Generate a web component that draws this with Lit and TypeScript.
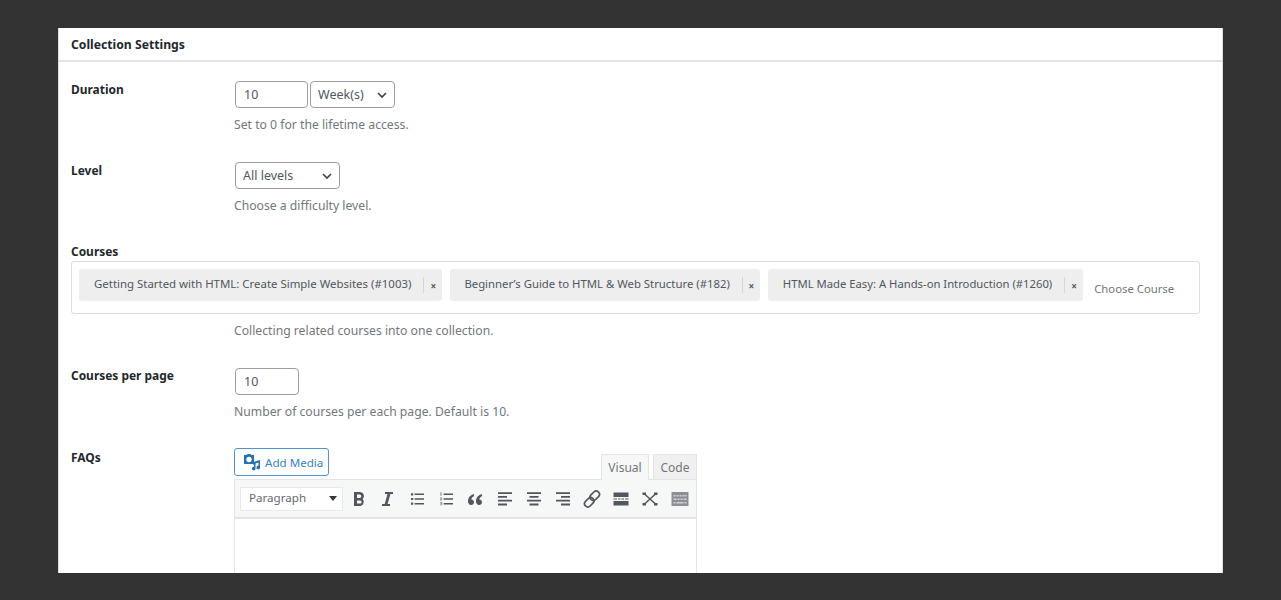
import { LitElement, html, css, svg } from "lit";
import { customElement } from "lit/decorators.js";

const chevron = html`<svg class="chev" width="12" height="12" viewBox="0 0 12 12"><path d="M2 4l4 4 4-4" fill="none" stroke="#3c434a" stroke-width="1.6"/></svg>`;

const I = (body: unknown, w = 20, h = 20) =>
  html`<svg class="ti" width=${w} height=${h} viewBox="0 0 20 20" fill="#50575e">${body}</svg>`;

@customElement("app-root")
export class AppRoot extends LitElement {
  static styles = css`
    :host { display: block; height: 600px; background: #333; padding: 28px 58px 27px; box-sizing: border-box; overflow: hidden;
      font-family: "Noto Sans", sans-serif; font-size: 12.5px; color: #3c434a; }
    .panel { height: 545px; background: #fff; overflow: hidden; border-left: 1px solid #dcdcde; border-right: 1px solid #dcdcde; box-sizing: border-box; }
    .head { height: 34px; border-bottom: 2px solid #e2e3e5; box-sizing: border-box; padding: 8px 12px 0; font-weight: 700; color: #23282d; line-height: 17px; font-size: 12.2px; }
    .row { display: grid; grid-template-columns: 163px 1fr; padding: 0 12px; }
    .label { font-weight: 700; color: #23282d; line-height: 17px; font-size: 11.95px; }
    .r1 { padding-top: 19px; }
    .r2 { padding-top: 29px; }
    .r4 { padding-top: 29px; }
    .r4 .label { margin-top: -1px; }
    .r5 { padding-top: 28px; }
    .r5 .label { margin-top: 1px; }
    .ctl { display: flex; gap: 2px; }
    .input, .select { height: 27px; border: 1px solid #9a9da1; border-radius: 4px; box-sizing: border-box; display: flex; align-items: center; color: #50575e; background: #fff; font-size: 12.5px; padding-bottom: 1px; }
    .input { padding-left: 8px; }
    .select { padding-left: 7px; justify-content: space-between; padding-right: 6px; }
    .chev { margin-top: 1px; }
    .w72 { width: 73px; } .w85 { width: 85px; } .w105 { width: 105px; } .w63 { width: 64px; }
    .field { padding-left: 1px; }
    .hint { color: #72777c; margin: 9px 0 0 -1px; line-height: 16px; font-size: 12.2px; }
    .courses { padding: 29px 12px 0; }
    .box { margin: 1px 10px 0 0; width: 1129px; height: 53px; border: 1px solid #dcdcde; border-radius: 3px; box-sizing: border-box; padding: 7px; display: flex; gap: 8px; }
    .chip { height: 32px; background: #eee; border-radius: 3px; display: flex; font-size: 11.35px; color: #50575e; align-items: flex-start; box-sizing: border-box; padding: 0 0 0 15px; }
    .chip.c1 { font-size: 11.43px; }
    .chip.c2 { padding-left: 14px; }
    .chip.c2 .x { width: 17px; }
    .chip.c3 { font-size: 11.27px; }
    .chip .t { line-height: 30px; white-space: nowrap; }
    .sep { width: 1px; height: 16px; background: #d5d5d5; margin: 8px 0 0 12px; }
    .x { width: 18px; text-align: center; font-size: 10px; line-height: 34px; font-weight: 700; color: #50575e; }
    .ph { color: #757575; font-size: 11.3px; line-height: 40px; margin-left: 3px; white-space: nowrap; }
    .h2 { margin: 9px 0 0 163px; }
    .editor { width: 463px; margin-left: -1px; }
    .top { display: flex; justify-content: space-between; align-items: flex-end; height: 31px; }
    .media { width: 95px; height: 28px; box-sizing: border-box; margin-bottom: 3px; border: 1px solid #4f94d4; border-radius: 3px; color: #3582c4; display: flex; align-items: center; gap: 4px; padding-left: 8px; font-size: 11.6px; }
    .tabs { display: flex; gap: 4px; }
    .tab { height: 25px; box-sizing: border-box; border: 1px solid #e2e4e7; border-bottom: 0; background: #f0f0f1; color: #72777c; font-size: 12px; line-height: 25px; text-align: center; width: 44px; }
    .tab.on { background: #f6f7f7; width: 48px; margin-bottom: -1px; height: 26px; }
    .bar { height: 40px; box-sizing: border-box; background: #f6f7f7; border: 1px solid #e2e4e7; border-bottom: 2px solid #e2e4e7; display: flex; align-items: center; padding-left: 5px; }
    .para { width: 103px; height: 24px; box-sizing: border-box; background: #fff; border: 1px solid #e8e9eb; margin-right: 1px; display: flex; align-items: center; justify-content: space-between; padding: 0 5px 2px 8px; font-size: 11.6px; color: #646970; }
    .caret { width: 0; height: 0; margin-top: 2px; border-left: 4px solid transparent; border-right: 4px solid transparent; border-top: 5px solid #32373c; }
    .tb { width: 29.2px; display: flex; justify-content: center; }
    .ti { display: block; }
    .area { height: 80px; border-left: 1px solid #e2e4e7; border-right: 1px solid #e2e4e7; }
  `;

  render() {
    const tools = [
      svg`<path d="M5 3h6a4 4 0 0 1 2.600 7A4.200 4.200 0 0 1 11.500 17H5zM8 5.600V9h2.600a1.700 1.700 0 0 0 0-3.400zM8 11.400v3.200h3a1.600 1.600 0 0 0 0-3.200z"/>`,
      svg`<path d="M7 3h8v2h-2.600L9.600 15H12v2H4v-2h2.700L9.500 5H7z"/>`,
      svg`<path d="M4 4.200h2.200v2.200H4zM4 8.900h2.200v2.200H4zM4 13.600h2.200v2.200H4zM7.600 4.500H17v1.600H7.600zM7.600 9.200H17v1.600H7.600zM7.600 13.900H17v1.600H7.600z"/>`,
      svg`<path d="M7.600 4.500H17v1.600H7.600zM7.600 9.200H17v1.600H7.600zM7.600 13.900H17v1.600H7.600z"/><path fill="#8c8f94" d="M4.400 3.200h1.200v3.600H4.400zM4 8.600h2.200v.9L5 10.500h1.200v.9H4v-.9l1.200-1H4zM4 13h2.200v3.200H4v-.8h1.400v-.4H4.400v-.7h1v-.5H4z"/>`,
      svg`<path d="M9 5C5.500 6 3 8.500 3 12.200 3 14.500 4.400 16 6.100 16 7.700 16 9 14.800 9 13.200 9 11.700 7.800 10.500 6.300 10.500 6.500 9 7.500 7.800 9 7.200zM17 5c-3.500 1-6 3.500-6 7.200 0 2.300 1.400 3.800 3.100 3.800 1.600 0 2.900-1.200 2.900-2.800 0-1.500-1.200-2.700-2.700-2.700.2-1.500 1.200-2.700 2.700-3.300z"/>`,
      svg`<path d="M3 3.200h14V5H3zM3 7h9v1.800H3zM3 10.800h14v1.800H3zM3 14.600h9v1.800H3z"/>`,
      svg`<path d="M3 3.200h14V5H3zM5.500 7h9v1.800h-9zM3 10.800h14v1.800H3zM5.500 14.600h9v1.800h-9z"/>`,
      svg`<path d="M3 3.200h14V5H3zM8 7h9v1.800H8zM3 10.800h14v1.800H3zM8 14.600h9v1.800H8z"/>`,
      svg`<g fill="none" stroke="#50575e" stroke-width="1.700"><rect x="9.500" y="1.500" width="6.500" height="10.500" rx="3.200" transform="rotate(45 12.750 6.750)"/><rect x="4" y="8" width="6.500" height="10.500" rx="3.200" transform="rotate(45 7.250 13.250)"/></g>`,
      svg`<path d="M2.500 3.500h15V8h-15zM2.500 12h15v4.500h-15zM2.500 9.400h3.500v1.200H2.500zM7 9.400h2.500v1.200H7zM10.500 9.400h2.500v1.200h-2.500zM14 9.400h3.500v1.200H14z"/>`,
      svg`<path d="M2.500 3.500h3.500v2.500H2.500zM14 3.500h3.500v2.500H14zM2.500 14h3.500v2.500H2.500zM14 14h3.500v2.500H14z"/><path d="M4 4.500l12 11M16 4.500l-12 11" stroke="#50575e" stroke-width="1.500"/>`,
      svg`<path fill="#8c8f94" d="M1.500 3h17v14h-17z"/><path fill="#d0d1d3" d="M3.500 6h2v1.500h-2zM6.500 6h2v1.500h-2zM9.500 6h2v1.500h-2zM12.500 6h2v1.500h-2zM15 6h1.500v1.500H15zM3.500 9.500h3v1.500h-3zM7.500 9.500h2v1.500h-2zM10.500 9.500h2v1.500h-2zM13.500 9.500h3v1.500h-3zM3.500 13h2v1.500h-2zM6.500 13h7v1.500h-7zM14.500 13h2v1.500h-2z"/>`,
    ];
    return html`<div class="panel">
      <div class="head">Collection Settings</div>
      <div class="row r1">
        <div class="label">Duration</div>
        <div class="field">
          <div class="ctl"><div class="input w72">10</div><div class="select w85">Week(s)${chevron}</div></div>
          <div class="hint">Set to 0 for the lifetime access.</div>
        </div>
      </div>
      <div class="row r2">
        <div class="label">Level</div>
        <div class="field">
          <div class="ctl"><div class="select w105">All levels${chevron}</div></div>
          <div class="hint">Choose a difficulty level.</div>
        </div>
      </div>
      <div class="courses">
        <div class="label">Courses</div>
        <div class="box">
          <div class="chip c1"><span class="t">Getting Started with HTML: Create Simple Websites (#1003)</span><span class="sep"></span><span class="x">×</span></div>
          <div class="chip c2"><span class="t">Beginner’s Guide to HTML &amp; Web Structure (#182)</span><span class="sep"></span><span class="x">×</span></div>
          <div class="chip c3"><span class="t">HTML Made Easy: A Hands-on Introduction (#1260)</span><span class="sep"></span><span class="x">×</span></div>
          <span class="ph">Choose Course</span>
        </div>
        <div class="hint h2">Collecting related courses into one collection.</div>
      </div>
      <div class="row r4">
        <div class="label">Courses per page</div>
        <div class="field">
          <div class="ctl"><div class="input w63">10</div></div>
          <div class="hint">Number of courses per each page. Default is 10.</div>
        </div>
      </div>
      <div class="row r5">
        <div class="label">FAQs</div>
        <div class="field">
          <div class="editor">
            <div class="top">
              <div class="media">
                <svg width="18" height="18" viewBox="0 0 18 18" fill="#2271b1"><path fill-rule="evenodd" d="M1 2h2.500l1-1h3l1 1H11v9H1zM6 3.800a2.700 2.700 0 1 0 0 5.400 2.700 2.700 0 0 0 0-5.400z"/><path d="M17 7v7.500a1.800 1.800 0 1 1-1.500-1.700V9.500l-3 1v5a1.800 1.800 0 1 1-1.500-1.700V12h-.5V9z"/></svg>
                Add Media
              </div>
              <div class="tabs"><div class="tab on">Visual</div><div class="tab">Code</div></div>
            </div>
            <div class="bar">
              <div class="para">Paragraph<span class="caret"></span></div>
              ${tools.map((t) => html`<div class="tb">${I(t)}</div>`)}
            </div>
            <div class="area"></div>
          </div>
        </div>
      </div>
    </div>`;
  }
}
